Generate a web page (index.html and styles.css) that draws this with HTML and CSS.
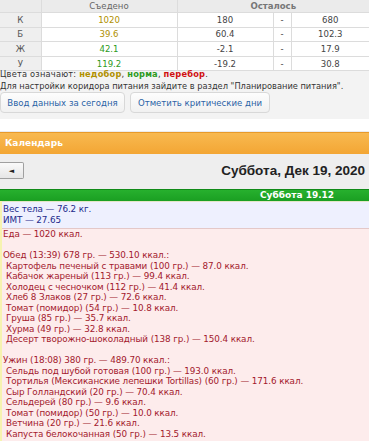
FILE: index.html
```html
<!DOCTYPE html>
<html lang="ru">
<head>
<meta charset="utf-8">
<link rel="stylesheet" href="styles.css">
</head>
<body>
<div class="top">
  <table class="norms">
    <colgroup><col class="c1"><col class="c2"><col class="c3"><col class="c4"><col class="c5"></colgroup>
    <tr class="hd"><th class="lbl"></th><th class="eat">Съедено</th><th colspan="3" class="rest">Осталось</th></tr>
    <tr><td class="lbl">К</td><td class="under">1020</td><td>180</td><td>-</td><td>680</td></tr>
    <tr><td class="lbl">Б</td><td class="under">39.6</td><td>60.4</td><td>-</td><td>102.3</td></tr>
    <tr><td class="lbl">Ж</td><td class="norm">42.1</td><td>-2.1</td><td>-</td><td>17.9</td></tr>
    <tr><td class="lbl">У</td><td class="norm">119.2</td><td>-19.2</td><td>-</td><td>30.8</td></tr>
  </table>
  <div class="legend">
    <p class="first">Цвета означают: <b class="under">недобор</b>, <b class="norm">норма</b>, <b class="over">перебор</b>.</p>
    <p>Для настройки коридора питания зайдите в раздел "Планирование питания".</p>
  </div>
  <div class="buttons">
    <button class="btn b1">Ввод данных за сегодня</button>
    <button class="btn b2">Отметить критические дни</button>
  </div>
</div>
<div class="sep"></div>
<div class="cal-title">Календарь</div>
<div class="cal-nav">
  <button class="prev">◄</button>
  <h2 class="date">Суббота, Дек 19, 2020</h2>
</div>
<div class="day-head"><span>Суббота 19.12</span></div>
<div class="day">
  <div class="body-info">
    <div>Вес тела — 76.2 кг.</div>
    <div>ИМТ — 27.65</div>
  </div>
  <div class="food">
    <div>Еда — 1020 ккал.</div>
    <div class="blank"></div>
    <div>Обед (13:39) 678 гр. — 530.10 ккал.:</div>
    <div class="item">Картофель печеный с травами (100 гр.) — 87.0 ккал.</div>
    <div class="item">Кабачок жареный (113 гр.) — 99.4 ккал.</div>
    <div class="item">Холодец с чесночком (112 гр.) — 41.4 ккал.</div>
    <div class="item">Хлеб 8 Злаков (27 гр.) — 72.6 ккал.</div>
    <div class="item">Томат (помидор) (54 гр.) — 10.8 ккал.</div>
    <div class="item">Груша (85 гр.) — 35.7 ккал.</div>
    <div class="item">Хурма (49 гр.) — 32.8 ккал.</div>
    <div class="item">Десерт творожно-шоколадный (138 гр.) — 150.4 ккал.</div>
    <div class="blank"></div>
    <div>Ужин (18:08) 380 гр. — 489.70 ккал.:</div>
    <div class="item">Сельдь под шубой готовая (100 гр.) — 193.0 ккал.</div>
    <div class="item">Тортилья (Мексиканские лепешки Tortillas) (60 гр.) — 171.6 ккал.</div>
    <div class="item">Сыр Голландский (20 гр.) — 70.4 ккал.</div>
    <div class="item">Сельдерей (80 гр.) — 9.6 ккал.</div>
    <div class="item">Томат (помидор) (50 гр.) — 10.0 ккал.</div>
    <div class="item">Ветчина (20 гр.) — 21.6 ккал.</div>
    <div class="item">Капуста белокочанная (50 гр.) — 13.5 ккал.</div>
  </div>
</div>
</body>
</html>
```
FILE: styles.css
```css
html, body {
  margin: 0;
  padding: 0;
  background: #ffffff;
  font-family: "DejaVu Sans", sans-serif;
  color: #333;
  overflow: hidden;
}
.top {
  background: #f3f3f3;
}
.norms {
  width: 369px;
  border-collapse: collapse;
  table-layout: fixed;
  font-family: "DejaVu Sans Condensed", "DejaVu Sans", sans-serif;
  font-stretch: condensed;
  font-size: 9.5px;
}
.c1 { width: 41px; }
.c2 { width: 136px; }
.c3 { width: 96px; }
.c4 { width: 18px; }
.c5 { width: 78px; }
.norms th, .norms td {
  border: 1px solid #dcdcdc;
  text-align: center;
  padding: 0;
  line-height: 12px;
  height: 13.6px;
}
.norms th {
  background: #ebebeb;
  color: #666;
  font-weight: normal;
  height: 12px;
}
.norms th.rest { font-weight: bold; color: #777; }
.norms td { background: #fff; color: #444; }
.norms td.lbl { background: #efefef; color: #555; }
.norms tr:first-child th { border-top: none; }
.norms th:first-child, .norms td:first-child { border-left: none; }
.norms th:last-child, .norms td:last-child { border-right: none; }
.under, .norms td.under { color: #b09000; }
.norm, .norms td.norm { color: #2d9a1c; }
.over { color: #d01010; }
.legend {
  margin-top: -3px;
  font-family: "DejaVu Sans Condensed", "DejaVu Sans", sans-serif;
  font-stretch: condensed;
  font-size: 9.2px;
  line-height: 12px;
  color: #333;
  white-space: nowrap;
}
.legend p { margin: 0; }
.legend .first { letter-spacing: 0.2px; }
.legend b { font-weight: bold; }
.buttons {
  display: flex;
  gap: 5px;
  padding: 0 0 6px 0;
}
.btn {
  font-family: "DejaVu Sans Condensed", "DejaVu Sans", sans-serif;
  font-stretch: condensed;
  font-size: 9.5px;
  color: #2b63a6;
  background: linear-gradient(#fdfdfd, #f1f1f1);
  border: 1px solid #d8d8d8;
  border-radius: 4px;
  height: 21px;
  padding: 0;
}
.b1 { width: 125px; }
.b2 { width: 140px; }
.sep {
  height: 12px;
  border-bottom: 1px solid #ececec;
  background: #fff;
}
.cal-title {
  height: 21px;
  line-height: 21px;
  background: linear-gradient(#f8b950, #f3a634);
  border-top: 1px solid #e89a2a;
  color: #fff;
  font-weight: bold;
  font-size: 9px;
  padding-left: 5px;
}
.cal-nav {
  background: #eeeeee;
  height: 35px;
  display: flex;
  align-items: center;
  justify-content: space-between;
  padding-right: 4px;
}
.prev {
  width: 24px;
  height: 17px;
  padding: 0;
  background: linear-gradient(#fafafa, #e6e6e6);
  border: 1px solid #a0a0a0;
  border-left: none;
  border-radius: 0 2px 2px 0;
  font-size: 7px;
  color: #222;
  font-family: "DejaVu Sans", sans-serif;
  margin-top: -2px;
}
.date {
  margin: 0;
  font-family: "Liberation Sans", Arial, sans-serif;
  font-size: 13.5px;
  font-weight: bold;
  color: #222;
  margin-top: -3px;
}
.day-head {
  background: linear-gradient(#27b02e, #1a9f22);
  border-top: 1px solid #108a18;
  height: 11px;
  line-height: 11px;
  color: #fff;
  font-weight: bold;
  font-size: 9px;
  padding-left: 260px;
}
.day {
  border-left: 2px solid #f6f3b0;
  font-size: 8.8px;
  letter-spacing: -0.1px;
}
.body-info {
  background: #eef0fe;
  color: #1d2b8c;
  padding: 2px 0 3px 1px;
  line-height: 10.5px;
  border-top: 1px solid #e4e6c8;
}
.food {
  background: #fdecec;
  color: #a3192c;
  padding: 0 0 10px 1px;
  line-height: 10.5px;
  border-top: 1px solid #e4c8c8;
}
.blank { height: 10.5px; }
.item { padding-left: 3px; }
```
